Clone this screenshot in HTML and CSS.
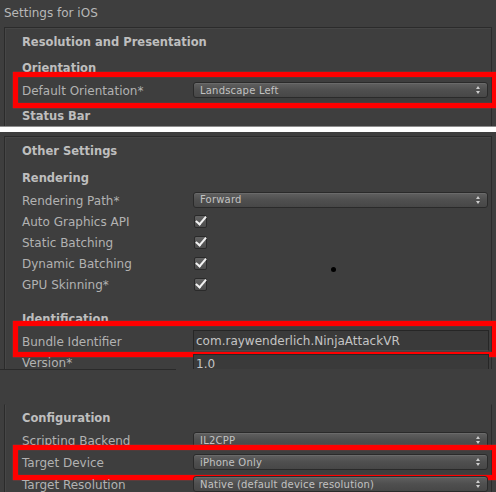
FILE: index.html
```html
<!DOCTYPE html>
<html>
<head>
<meta charset="utf-8">
<link rel="stylesheet" href="styles.css">
</head>
<body>
<section class="slice slice-a">
  <div class="win-title">Settings for iOS</div>
  <div class="panel">
    <div class="sec-title">Resolution and Presentation</div>
    <div class="sub-title sub-orient">Orientation</div>
    <div class="row row-20">
      <span class="label">Default Orientation*</span>
      <div class="dropdown"><span>Landscape Left</span><i class="arrows"></i></div>
      <div class="mark mark-a"></div>
    </div>
    <div class="sub-title sub-status">Status Bar</div>
  </div>
</section>
<div class="sep-gray"></div>
<div class="sep-white"></div>
<section class="slice slice-b">
  <div class="panel">
    <div class="sec-title sec-other">Other Settings</div>
    <div class="sub-title sub-render">Rendering</div>
    <div class="row">
      <span class="label">Rendering Path*</span>
      <div class="dropdown"><span>Forward</span><i class="arrows"></i></div>
    </div>
    <div class="row"><span class="label">Auto Graphics API</span><span class="check"></span></div>
    <div class="row"><span class="label">Static Batching</span><span class="check"></span></div>
    <div class="row"><span class="label">Dynamic Batching</span><span class="check"></span></div>
    <div class="row"><span class="label">GPU Skinning*</span><span class="check"></span></div>
    <div class="sub-title sub-ident">Identification</div>
    <div class="row">
      <span class="label">Bundle Identifier</span>
      <div class="field">com.raywenderlich.NinjaAttackVR</div>
      <div class="mark mark-b"></div>
    </div>
    <div class="row">
      <span class="label">Version*</span>
      <div class="field field-plain">1.0</div>
    </div>
  </div>
  <div class="cursor-dot"></div>
</section>
<div class="sep-dark"></div>
<section class="slice slice-c">
  <div class="panel panel-open">
    <div class="sec-title sec-config">Configuration</div>
    <div class="row row-22">
      <span class="label">Scripting Backend</span>
      <div class="dropdown"><span>IL2CPP</span><i class="arrows"></i></div>
    </div>
    <div class="row row-22">
      <span class="label">Target Device</span>
      <div class="dropdown"><span>iPhone Only</span><i class="arrows"></i></div>
      <div class="mark mark-c"></div>
    </div>
    <div class="row row-22">
      <span class="label">Target Resolution</span>
      <div class="dropdown"><span>Native (default device resolution)</span><i class="arrows"></i></div>
    </div>
  </div>
</section>
</body>
</html>
```
FILE: styles.css
```css
html, body {
  margin: 0;
  padding: 0;
  background: #3e3e3e;
  width: 496px;
  height: 492px;
  overflow: hidden;
  font-family: "DejaVu Sans", "Liberation Sans", sans-serif;
  color: #b2b2b2;
}

.slice {
  position: relative;
  overflow: hidden;
}
.slice-a { height: 126px; }
.slice-b { height: 237px; }
.slice-c { height: 122px; padding-top: 34px; box-sizing: border-box; overflow: visible; }

.sep-gray { height: 1px; background: #8d8d8d; }
.sep-white { height: 5px; background: #ffffff; }
.sep-dark { height: 1px; width: 176px; background: #2a2a2a; }

.win-title {
  height: 27px;
  line-height: 26px;
  padding-left: 4px;
  font-size: 12px;
  color: #b8b8b8;
}

.panel {
  margin: 0 4px;
  border: 1px solid #2b2b2b;
  border-bottom: none;
  box-shadow: inset 1px 1px 0 #464646;
  padding-left: 17px;
  padding-right: 2px;
  min-height: 400px;
}
.slice-b .panel { margin-top: 4px; }
.panel-open { border-top-color: transparent; box-shadow: inset 1px 0 0 #464646; min-height: 0; height: 88px; }

.sec-title, .sub-title {
  display: flex;
  align-items: center;
  box-sizing: border-box;
  padding-top: 2px;
  font-size: 11.5px;
  font-weight: bold;
  color: #bebebe;
}
.sec-title { height: 25px; }
.sec-other { height: 26px; }
.sec-config { height: 24px; }

.sub-orient { height: 27px; }
.sub-status { height: 30px; }
.sub-render { height: 26px; padding-top: 4px; }
.sub-ident { height: 36px; padding-top: 14px; }

.row {
  position: relative;
  height: 21px;
  display: flex;
  align-items: center;
}
.row-20 { height: 20px; }
.row-22 { height: 22px; }

.label {
  width: 171px;
  flex: none;
  padding-top: 2px;
  font-size: 12px;
  color: #b2b2b2;
  white-space: nowrap;
}

.dropdown {
  position: relative;
  box-sizing: border-box;
  width: 295px;
  height: 16px;
  border: 1px solid #2a2a2a;
  border-radius: 3px;
  background: linear-gradient(#606060, #4f4f4f 50%, #474747);
  box-shadow: inset 0 1px 0 #6a6a6a;
  display: flex;
  align-items: center;
  padding-left: 6px;
  font-size: 10px;
  letter-spacing: 0.2px;
  color: #c2c2c2;
  white-space: nowrap;
}

.arrows {
  position: absolute;
  right: 6px;
  top: 3px;
  width: 5px;
  height: 8px;
}
.arrows::before, .arrows::after {
  content: "";
  position: absolute;
  left: 0;
  border-left: 2.5px solid transparent;
  border-right: 2.5px solid transparent;
}
.arrows::before { top: 0; border-bottom: 3px solid #cfcfcf; }
.arrows::after { bottom: 0; border-top: 3px solid #cfcfcf; }

.check {
  position: relative;
  width: 13px;
  height: 13px;
  margin-left: 1px;
  margin-top: 2px;
  box-sizing: border-box;
  border: 1px solid #2a2a2a;
  border-radius: 2px;
  background: linear-gradient(#626262, #4c4c4c);
}
.check::after {
  content: "";
  position: absolute;
  left: 3px;
  top: -2px;
  width: 4px;
  height: 9px;
  border-right: 2px solid #f2f2f2;
  border-bottom: 2px solid #f2f2f2;
  transform: rotate(40deg);
}

.field {
  box-sizing: border-box;
  width: 296px;
  height: 21px;
  border: 1px solid #262626;
  border-bottom-color: #4a4a4a;
  background: #3a3a3a;
  padding-left: 2px;
  padding-top: 1px;
  display: flex;
  align-items: center;
  font-size: 12px;
  color: #c4c4c4;
  white-space: nowrap;
}
.field-plain { height: 18px; margin-top: 3px; }

.mark {
  position: absolute;
  box-sizing: border-box;
  left: -9px;
  right: -8px;
  border: 5px solid #ff0000;
  box-shadow: 0 0 1px #ff2a2a, inset 0 0 1px #ff2a2a;
  pointer-events: none;
}
.mark-a { top: -8px; height: 36px; }
.mark-b { top: -9px; height: 36px; }
.mark-c { top: -6px; height: 35px; }

.cursor-dot {
  position: absolute;
  left: 331px;
  top: 135px;
  width: 5px;
  height: 5px;
  border-radius: 50%;
  background: #000;
}
```
